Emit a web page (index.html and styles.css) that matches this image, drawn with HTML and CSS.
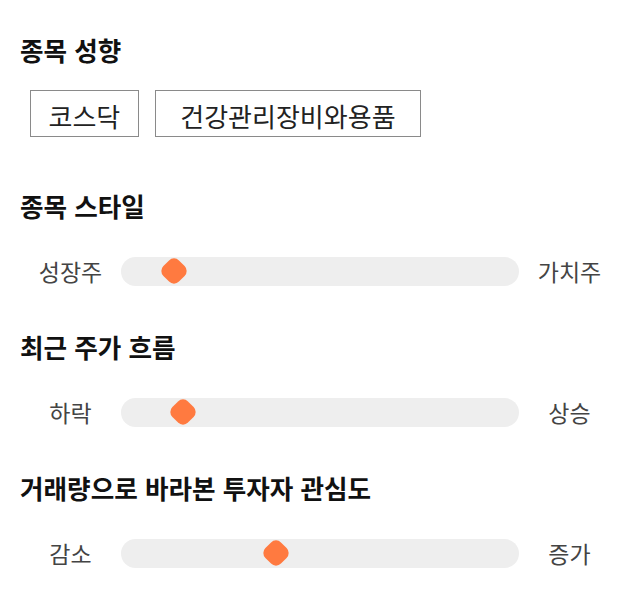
FILE: index.html
```html
<!DOCTYPE html>
<html lang="ko">
<head>
<meta charset="utf-8">
<link rel="stylesheet" href="styles.css">
</head>
<body>
<main class="page">
  <section class="section section-tags">
    <h2 class="title">종목 성향</h2>
    <div class="chips">
      <span class="chip">코스닥</span>
      <span class="chip chip-wide">건강관리장비와용품</span>
    </div>
  </section>

  <section class="section section-slider">
    <h2 class="title">종목 스타일</h2>
    <div class="slider-row">
      <span class="label">성장주</span>
      <div class="track"><span class="thumb" style="left: 13.3%"></span></div>
      <span class="label">가치주</span>
    </div>
  </section>

  <section class="section section-slider">
    <h2 class="title">최근 주가 흐름</h2>
    <div class="slider-row">
      <span class="label">하락</span>
      <div class="track"><span class="thumb" style="left: 15.6%"></span></div>
      <span class="label">상승</span>
    </div>
  </section>

  <section class="section section-slider">
    <h2 class="title">거래량으로 바라본 투자자 관심도</h2>
    <div class="slider-row">
      <span class="label">감소</span>
      <div class="track"><span class="thumb" style="left: 38.9%"></span></div>
      <span class="label">증가</span>
    </div>
  </section>
</main>
</body>
</html>
```

FILE: styles.css
```css
html, body {
  margin: 0;
  padding: 0;
  background: #ffffff;
}

body {
  font-family: "Noto Sans CJK KR", "Noto Sans", sans-serif;
  color: #111;
}

.page {
  padding: 35px 20px 0 20px;
  display: flex;
  flex-direction: column;
}

.title {
  margin: 0;
  font-size: 25.6px;
  line-height: 30px;
  font-weight: 700;
  color: #111;
}

.section-tags {
  padding-bottom: 54px;
}

.chips {
  display: flex;
  gap: 16px;
  margin-top: 25px;
  padding-left: 10px;
}

.chip {
  display: inline-flex;
  align-items: center;
  justify-content: center;
  box-sizing: border-box;
  height: 47px;
  padding: 4px 17.5px 0;
  border: 1px solid #8a8a8a;
  font-size: 26px;
  color: #222;
  line-height: 1;
}

.chip-wide {
  padding: 4px 24.5px 0;
}

.section-slider {
  padding-bottom: 46px;
}

.slider-row {
  display: grid;
  grid-template-columns: 101px 1fr 101px;
  align-items: center;
  margin-top: 35px;
}

.label {
  text-align: center;
  font-size: 23px;
  line-height: 30px;
  color: #444;
}

.track {
  position: relative;
  height: 29px;
  background: #eeeeee;
  border-radius: 15px;
}

.thumb {
  position: absolute;
  top: 50%;
  width: 22px;
  height: 22px;
  background: #ff7a40;
  border-radius: 7px;
  transform: translate(-50%, -50%) rotate(45deg);
}
```
